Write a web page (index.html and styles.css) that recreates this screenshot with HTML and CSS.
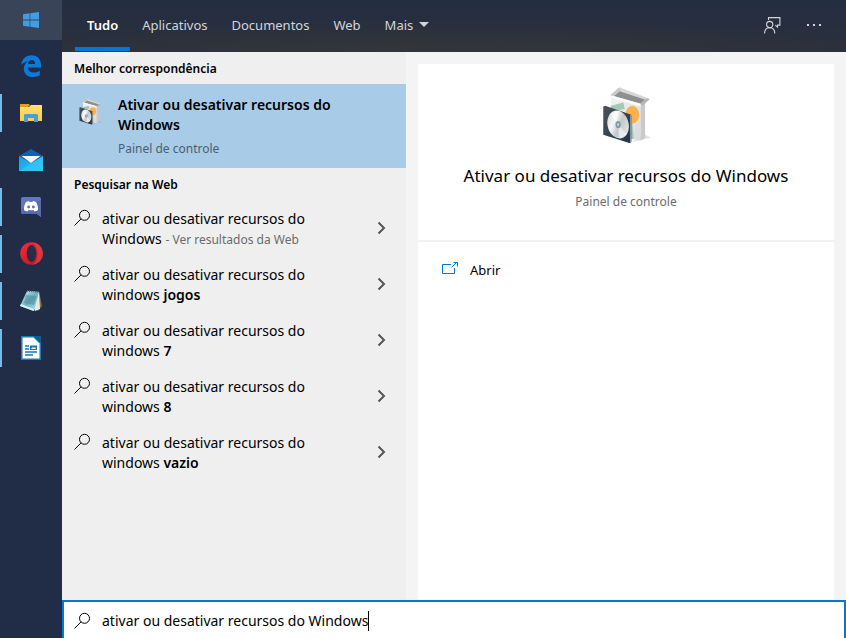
FILE: index.html
```html
<!DOCTYPE html>
<html lang="pt-BR">
<head>
<meta charset="utf-8">
<title>Pesquisar</title>
<link rel="stylesheet" href="styles.css">
</head>
<body>
<svg class="defs" aria-hidden="true">
  <defs>
    <linearGradient id="boxFront" x1="0" y1="0" x2="1" y2="1"><stop offset="0" stop-color="#f3f3f3"/><stop offset="1" stop-color="#d9d9d9"/></linearGradient>
    <linearGradient id="disc" x1="0" y1="0" x2="1" y2="1"><stop offset="0" stop-color="#cfd3d4"/><stop offset=".35" stop-color="#f6f6f6"/><stop offset=".55" stop-color="#c3c8ca"/><stop offset="1" stop-color="#f0f0f0"/></linearGradient>
    <linearGradient id="case" x1="0" y1="0" x2="1" y2="1"><stop offset="0" stop-color="#4a5358"/><stop offset="1" stop-color="#1d3346"/></linearGradient>
    <linearGradient id="folder" x1="0" y1="0" x2="0" y2="1"><stop offset="0" stop-color="#ffe07a"/><stop offset="1" stop-color="#ffcb45"/></linearGradient>
    <linearGradient id="opera" x1="0" y1="0" x2="1" y2="1"><stop offset="0" stop-color="#ff2a3a"/><stop offset="1" stop-color="#b4101c"/></linearGradient>
    <linearGradient id="note" x1="0" y1="0" x2="1" y2="1"><stop offset="0" stop-color="#d6eef2"/><stop offset=".5" stop-color="#6fb0bd"/><stop offset="1" stop-color="#b9e6ee"/></linearGradient>
    <linearGradient id="mail" x1="0" y1="0" x2="1" y2="1"><stop offset="0" stop-color="#1c9be6"/><stop offset="1" stop-color="#29c3f5"/></linearGradient>
  </defs>
  <symbol id="software" viewBox="32 20 156 176">
    <path d="M128 190l58-14-24-10z" fill="#000" opacity=".12"/>
    <path d="M64 48l90 26v112l-90-24z" fill="url(#boxFront)"/>
    <path d="M154 74l14-12v116l-14 8z" fill="#c9c9c9"/>
    <path d="M64 80l38-10 4 20-42 8z" fill="#a5c9b6"/>
    <path d="M112 120l16-4 6 66-22-6z" fill="#9fcab2"/>
    <ellipse cx="129" cy="107" rx="21" ry="27" fill="#fbb04a"/>
    <path d="M64 48l26-22 82 32-18 16z" fill="#8f8f8f"/>
    <path d="M90 24l90 34-4 6-86-28z" fill="#d7d7d7"/>
    <path d="M62 48l28-24 4 10-24 20z" fill="#c9c9c9"/>
    <path d="M64 48l90 26v8l-90-26z" fill="#fafafa"/>
    <path d="M154 74l18-16 10 2-22 20z" fill="#b5b5b5"/>
    <path d="M41 82l6-2 79 27v84l-6 2-79-25z" fill="url(#case)"/>
    <path d="M122 106l4 1v84l-4 1z" fill="#8795a0"/>
    <ellipse cx="86" cy="137" rx="32" ry="43" transform="rotate(-14 86 137)" fill="url(#disc)"/>
    <path d="M86 137l-24-30c8-9 16-12 22-10zM86 137l25 29c-7 10-14 14-22 12z" fill="#fff" opacity=".5"/>
    <ellipse cx="86" cy="137" rx="8" ry="11" fill="#819aa8"/>
    <ellipse cx="86" cy="137" rx="3" ry="5" fill="#c8d2d9"/>
  </symbol>
  <symbol id="search" viewBox="0 0 18 18">
    <circle cx="10.500" cy="6.300" r="5" fill="none" stroke="currentColor" stroke-width="1"/>
    <path d="M7 9.900L.5 16.500" stroke="currentColor" stroke-width="1" fill="none"/>
  </symbol>
  <symbol id="chevron" viewBox="0 0 8 14">
    <path d="M1 1.500L6.500 7 1 12.500" fill="none" stroke="currentColor" stroke-width="2"/>
  </symbol>
</svg>

<div class="desktop">
  <nav class="taskbar" aria-label="Barra de tarefas">
    <button class="start" aria-label="Iniciar">
      <svg width="16" height="16" viewBox="0 0 16 16" fill="#429ce3"><path d="M0 2.200L6.600 1.300v6.300H0zM7.300 1.200L16 0v7.600H7.300zM0 8.400h6.600v6.300L0 13.800zM7.300 8.400H16V16l-8.700-1.200z"/></svg>
    </button>
    <button class="task" aria-label="Edge">
      <svg width="20" height="22" viewBox="0 0 20 22"><path fill="#0b7bdb" d="M.3 9.800C1 4 4.800.2 10.400.2 16.500.2 20 4.400 20 10v2.500H6.800c.2 3.400 2.700 5 6 5 2.200 0 4.300-.7 6-1.800v4.600C17 21.300 14.600 22 11.900 22 6.500 22 2.800 18.800 2.800 13.700c0-3.300 1.700-6 4.700-7.500C4.700 6.600 2 7.900.3 9.800zM7 8.900h7.100c0-2.600-1.300-4-3.500-4-1.900 0-3.300 1.500-3.600 4z"/></svg>
    </button>
    <button class="task running" aria-label="Explorador de Arquivos">
      <svg width="22" height="18" viewBox="0 0 22 18"><path d="M0 0h9l1 2H0z" fill="#e69b00"/><path d="M0 3h9l2-2h11v16H0z" fill="url(#folder)"/><path d="M0 0h9v2L8 3H0z" fill="#e2a013"/><path d="M4 18v-7l1-1h12l1 1v7h-4v-4H8v4z" fill="#459fdc"/></svg>
    </button>
    <button class="task" aria-label="Email">
      <svg width="24" height="22" viewBox="0 0 24 22"><path d="M0 7l12-7 12 7v2H0z" fill="#0a64b4"/><path d="M0 7h24v15H0z" fill="url(#mail)"/><path d="M0 22L24 7v15z" fill="#38c9f6" opacity=".65"/><path d="M0 7h24l-12 7z" fill="#0a57a0"/><path d="M2.500 7h19L12 14z" fill="#f4f5f7"/></svg>
    </button>
    <button class="task running" aria-label="Discord">
      <svg width="20" height="20" viewBox="0 0 20 20"><path d="M2 0h16a2 2 0 012 2v18l-4-3H2a2 2 0 01-2-2V2a2 2 0 012-2z" fill="#6575bd"/><path d="M0 12L20 3v17l-4-3H2a2 2 0 01-2-2z" fill="#5869b3"/><path d="M5 5l3-1 .6 1h2.800L12 4l3 1c1.500 2.500 2.200 5 2 8-1.200 1-2.400 1.400-3.500 1.500l-.8-1.300H7.300l-.8 1.300C5.400 14.400 4.200 14 3 13c-.2-3 .5-5.500 2-8z" fill="#fff"/><circle cx="7.600" cy="10" r="1.400" fill="#5d6fb8"/><circle cx="12.400" cy="10" r="1.400" fill="#5d6fb8"/></svg>
    </button>
    <button class="task running" aria-label="Opera">
      <svg width="23" height="23" viewBox="0 0 23 23"><ellipse cx="11.500" cy="11.500" rx="11.300" ry="11.300" fill="url(#opera)"/><path d="M12 .5C19 .5 23 6 23 11.500S19 22.500 12 22.500c3-1 5.500-5 5.500-11S15 1.500 12 .5z" fill="#e94950" opacity=".6"/><ellipse cx="11.500" cy="11.500" rx="4.800" ry="8.500" fill="#232f49"/></svg>
    </button>
    <button class="task running" aria-label="Bloco de Notas">
      <svg width="24" height="22" viewBox="0 0 24 22"><path d="M20 1l3 15-4 5-3-2z" fill="#8a6d3d"/><path d="M8 1l12 1 1 17-5 2z" fill="#e5eaec"/><path d="M8 1l12 1-5 19L1 16z" fill="url(#note)"/><path d="M7 5l11 1-3 9-10-2z" fill="#3f8294" opacity=".45"/><path d="M2 14l13 5-.5 2L1 16z" fill="#d3f3f7"/><path d="M8 1l12 1" stroke="#75664b" stroke-width="1.500" stroke-dasharray="1 1"/></svg>
    </button>
    <button class="task running" aria-label="Writer">
      <svg width="20" height="24" viewBox="0 0 20 24"><path d="M0 0h13l7 7v17H0z" fill="#157ab9"/><path d="M1.500 1.500h11l6 6v15h-17z" fill="#fff"/><path d="M12.500 0H20v7.500z" fill="#0b5d93"/><path d="M4 10h4M4 13h4M4 16h12M4 19h8" stroke="#157ab9" stroke-width="1.300"/><path d="M9 9.500h7v4.500H9z" fill="#157ab9"/><path d="M10 13l2-2 1 1 1-1 1 2z" fill="#fff"/></svg>
    </button>
  </nav>

  <div class="panel">
    <header class="header">
      <nav class="tabs" aria-label="Filtros">
        <button class="tab active">Tudo</button>
        <button class="tab">Aplicativos</button>
        <button class="tab">Documentos</button>
        <button class="tab">Web</button>
        <button class="tab more">Mais <svg width="10" height="5" viewBox="0 0 10 5"><path d="M0 0h10L5 5z" fill="currentColor"/></svg></button>
      </nav>
      <div class="actions">
        <button class="action" aria-label="Comentários"><svg width="17" height="17" viewBox="0 0 17 17" fill="none" stroke="currentColor" stroke-width="1.100"><path d="M4.500 3V.6h11.400v7.500H13.500v2L11.300 8.100"/><circle cx="5.700" cy="7.500" r="3.100"/><path d="M.6 16.500c0-3.600 2-5.800 5.100-5.800s5.100 2.200 5.100 5.800"/></svg></button>
        <button class="action" aria-label="Opções"><svg width="14" height="2" viewBox="0 0 14 2" fill="currentColor"><path d="M0 0h2v2H0zM6 0h2v2H6zM12 0h2v2h-2z"/></svg></button>
      </div>
    </header>

    <main class="content">
      <section class="results">
        <h2 class="heading">Melhor correspondência</h2>
        <button class="best">
          <svg class="best-icon"><use href="#software"/></svg>
          <span class="best-text"><span class="best-title">Ativar ou desativar recursos do Windows</span><span class="subtitle">Painel de controle</span></span>
        </button>
        <h2 class="heading">Pesquisar na Web</h2>
        <button class="result"><svg class="glass"><use href="#search"/></svg><span class="query">ativar ou desativar recursos do Windows <small class="hint">- Ver resultados da Web</small></span><svg class="chevron"><use href="#chevron"/></svg></button>
        <button class="result"><svg class="glass"><use href="#search"/></svg><span class="query">ativar ou desativar recursos do windows <b>jogos</b></span><svg class="chevron"><use href="#chevron"/></svg></button>
        <button class="result"><svg class="glass"><use href="#search"/></svg><span class="query">ativar ou desativar recursos do windows <b>7</b></span><svg class="chevron"><use href="#chevron"/></svg></button>
        <button class="result"><svg class="glass"><use href="#search"/></svg><span class="query">ativar ou desativar recursos do windows <b>8</b></span><svg class="chevron"><use href="#chevron"/></svg></button>
        <button class="result"><svg class="glass"><use href="#search"/></svg><span class="query">ativar ou desativar recursos do windows <b>vazio</b></span><svg class="chevron"><use href="#chevron"/></svg></button>
      </section>

      <section class="preview">
        <div class="card">
          <div class="summary">
            <svg class="app-icon"><use href="#software"/></svg>
            <h1 class="app-title">Ativar ou desativar recursos do Windows</h1>
            <p class="subtitle">Painel de controle</p>
          </div>
          <button class="open"><svg class="open-icon" viewBox="0 0 16 13" fill="none" stroke="#0078d7"><path d="M9 2.500H.5v9h12V6M9.500 5.500l5-5M11.500.5h4v4"/></svg>Abrir</button>
        </div>
      </section>
    </main>

    <label class="searchbox">
      <svg class="glass"><use href="#search"/></svg>
      <input class="search-input" type="text" aria-label="Pesquisar" value="ativar ou desativar recursos do Windows">
      <span class="caret"></span>
    </label>
  </div>
</div>
</body>
</html>
```
FILE: styles.css
```css
* { box-sizing: border-box; }
body {
  margin: 0;
  font-family: "Noto Sans", "Open Sans", sans-serif;
  font-size: 14px;
  line-height: 20px;
  color: #000;
}
button {
  margin: 0;
  padding: 0;
  border: 0;
  background: none;
  font: inherit;
  color: inherit;
  text-align: left;
}
h1, h2, p { margin: 0; font-weight: 400; }
svg { flex: none; display: block; }
.defs { position: absolute; width: 0; height: 0; }

.desktop { display: flex; min-height: 100vh; }

.taskbar {
  flex: none;
  display: flex;
  flex-direction: column;
  width: 62px;
  background: #212d46;
}
.start, .task { display: flex; align-items: center; justify-content: center; }
.start { height: 40px; margin-bottom: 2px; background: #394458; }
.task {
  height: 47px;
  padding-right: 2px;
  border-left: 2px solid transparent;
}
.running {
  background: linear-gradient(#76b9ed, #76b9ed) no-repeat 0 5px / 2px 38px;
  background-origin: border-box;
}

.panel { flex: 1; min-width: 0; display: flex; flex-direction: column; }

.header {
  display: flex;
  justify-content: space-between;
  height: 52px;
  padding: 0 25px 0 13px;
  background:
    radial-gradient(ellipse 60% 70% at 48% 110%, #35363a, transparent),
    linear-gradient(#232e42, #2b303b);
  color: #d3d5d9;
  font-size: 13px;
}
.tabs, .actions { display: flex; }
.tab {
  height: 51px;
  padding: 2px 12px 0;
  border-bottom: 4px solid transparent;
}
.active { border-color: #0078d7; color: #fff; font-weight: 600; }
.more { display: flex; align-items: center; gap: 6px; }
.actions { align-items: center; gap: 26px; padding-bottom: 2px; }

.content { flex: 1; display: flex; }
.results { flex: none; width: 344px; background: #efefef; }
.heading {
  padding: 7px 12px 5px;
  font-size: 12px;
  font-weight: 600;
}
.best {
  display: flex;
  gap: 16px;
  width: 100%;
  padding: 11px 60px 9px 16px;
  background: #a8cbe8;
}
.best-icon { width: 24px; height: 29px; margin-top: 2px; }
.best-title { display: block; font-weight: 600; }
.subtitle { display: block; font-size: 12px; color: #6b6b6b; }
.best .subtitle { margin-top: 4px; color: #4b5f70; }
.result {
  display: flex;
  align-items: center;
  width: 100%;
  height: 56px;
  padding: 0 20px 0 12px;
}
.glass { width: 18px; height: 18px; }
.result .glass { align-self: flex-start; margin-top: 9px; }
.query { flex: 1; margin-left: 10px; padding: 2px 72px 0 0; }
.query b { font-weight: 600; }
.hint { font-size: 12px; color: #6b6b6b; white-space: nowrap; }
.chevron { width: 9px; height: 14px; color: #555; }

.preview { flex: 1; display: flex; padding: 12px 12px 0; background: #f4f4f4; }
.card { flex: 1; background: #fff; }
.summary {
  display: flex;
  flex-direction: column;
  align-items: center;
  padding: 22px 12px 28px;
  border-bottom: 2px solid #f2f2f2;
}
.app-icon { width: 52px; height: 58px; }
.app-title { margin: 20px 0 4px; font-size: 17px; line-height: 24px; }
.open {
  display: flex;
  align-items: center;
  gap: 12px;
  width: 100%;
  padding: 18px 24px;
  font-size: 13px;
}
.open-icon { width: 16px; height: 13px; margin-bottom: 4px; }

.searchbox {
  display: flex;
  align-items: center;
  height: 38px;
  padding: 2px 10px 0;
  border: 2px solid #0078d7;
  border-bottom: 0;
  background: #fff;
}
.search-input {
  field-sizing: content;
  margin-left: 10px;
  padding: 0;
  border: 0;
  outline: 0;
  background: none;
  font: inherit;
  color: inherit;
}
.caret { width: 1px; height: 20px; background: #000; }
```
